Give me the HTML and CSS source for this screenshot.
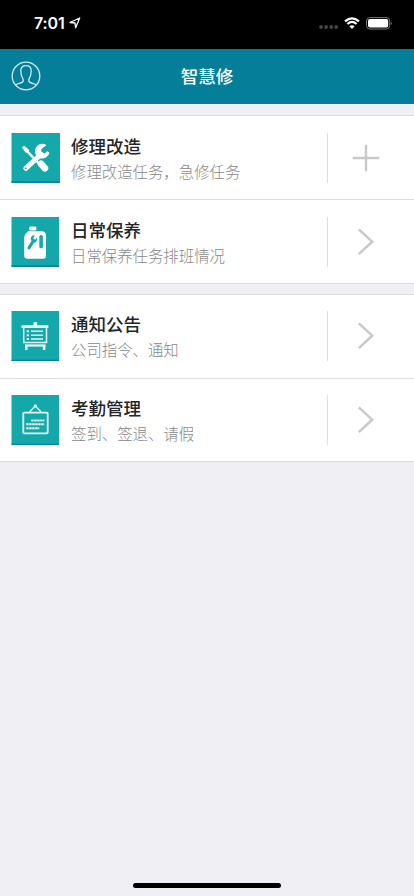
FILE: index.html
```html
<!DOCTYPE html>
<html lang="zh-CN">
<head>
<meta charset="utf-8">
<meta name="viewport" content="width=device-width, initial-scale=1">
<title>智慧修</title>
<link rel="stylesheet" href="styles.css">
</head>
<body>
<div class="status">
  <span class="time">7:01</span>
  <svg class="location" width="12" height="12" viewBox="0 0 12 12"><path d="M1 5.5 10.7 1 6.6 10.8 6 6Z" fill="none" stroke="#fff" stroke-width="1.3" stroke-linejoin="round"/></svg>
  <div class="signals">
    <svg width="20" height="4" viewBox="0 0 20 4" fill="#444"><circle cx="2" cy="2" r="1.9"/><circle cx="7.1" cy="2" r="1.9"/><circle cx="12.2" cy="2" r="1.9"/><circle cx="17.2" cy="2" r="1.9"/></svg>
    <svg class="wifi" width="16" height="12" viewBox="0 0 16 12" fill="none" stroke="#fff" stroke-width="2.1"><path d="M1 4.4Q8-1.8 15 4.4M3.4 7Q8 2.9 12.6 7"/><path d="M8 11.9 5.4 9.3Q8 7.2 10.6 9.3Z" fill="#fff" stroke="none"/></svg>
    <svg class="battery" width="27" height="13" viewBox="0 0 27 13"><rect x=".5" y=".6" width="23.2" height="11.4" rx="3.4" fill="none" stroke="#777"/><rect x="2" y="2.1" width="20.2" height="8.4" rx="2" fill="#fff"/><path d="M24.8 4.4Q27 6.3 24.8 8.2Z" fill="#777"/></svg>
  </div>
</div>
<header class="navbar">
  <svg class="avatar" width="30" height="30" viewBox="0 0 30 30" fill="none" stroke="#d5eaf0" stroke-width="1.3"><circle cx="15" cy="15" r="13.8"/><path d="M4.2 23.9C6 22.6 9.5 22.2 11 21.4 12.8 20.4 12.4 18.4 11.6 17.2 10.4 15.2 9.8 13 9.8 9.8 9.8 6.2 11.5 4.6 15 4.6S20.2 6.2 20.2 9.8C20.2 13 19.6 15.2 18.4 17.2 17.6 18.4 17.2 20.4 19 21.4 20.5 22.2 24 22.6 25.8 23.9"/></svg>
  <h1>智慧修</h1>
</header>
<main>
  <section class="group">
    <a class="row">
      <svg class="tile" viewBox="0 0 48 49" preserveAspectRatio="none"><rect x=".5" width="47.5" height="49" fill="#14a8aa"/><rect x=".5" y="47.3" width="47.5" height="1.7" fill="#0783a0"/>
        <g fill="none" stroke="#fff"><path d="M15.5 17.5 27 29.5" stroke-width="2.2"/><path d="M29.4 30.2 33.2 34.5" stroke-width="6.6" stroke-linecap="round"/><path d="M14.5 34.7 29.5 20.7" stroke-width="4.9" stroke-linecap="round"/></g>
        <path d="M10.5 14 12.8 12.5 17.4 16.2 17.8 19.6 14.4 19Z" fill="#fff"/><path d="M34.8 12A7.2 7.2 0 1 0 37.7 19.2L35.2 17.8 33.2 20 29.5 19.4 29.7 15.7Z" fill="#fff"/><circle cx="14.3" cy="34.7" r=".9" fill="#14a8aa"/></svg>
      <div class="copy"><h2>修理改造</h2><p>修理改造任务，急修任务</p></div>
      <div class="action"><svg width="28" height="28" viewBox="0 0 28 28"><path d="M14 .7V27.3M.7 14H27.3"/></svg></div>
    </a>
    <a class="row">
      <svg class="tile" viewBox="0 0 48 49" preserveAspectRatio="none"><rect x=".5" width="47.5" height="49" fill="#14a8aa"/><rect x=".5" y="47.3" width="47.5" height="1.7" fill="#0783a0"/>
        <rect x="18.3" y="9.2" width="7" height="4" rx="1.2" fill="#fff"/><path d="M17 14H30.5Q35 14 35 18.5V38Q35 41 32 41H16.2Q13.2 41 13.2 38V21Q13.2 18.5 14.3 17Z" fill="#fff"/><path d="M18 30.3 22 24" stroke="#14a8aa" stroke-width="3" stroke-linecap="round"/><path d="M23.7 17.6Q19.2 17.8 19.8 22.6L22.5 25.5Q26.8 24.8 26 20.2L24.1 22.3 22.3 21Z" fill="#14a8aa"/><rect x="28.3" y="17.6" width="3.6" height="13" rx="1.5" fill="#14a8aa"/></svg>
      <div class="copy"><h2>日常保养</h2><p>日常保养任务排班情况</p></div>
      <div class="action"><svg width="28" height="28" viewBox="0 0 28 28"><path class="chevron" d="M6.8 1.3 20.2 13.7 6.8 26.1"/></svg></div>
    </a>
  </section>
  <section class="group raised">
    <a class="row">
      <svg class="tile" viewBox="0 0 48 49" preserveAspectRatio="none"><rect x=".5" width="47.5" height="49" fill="#14a8aa"/><rect x=".5" y="47.8" width="47.5" height="1.2" fill="#0783a0"/>
        <g fill="none" stroke="#e3f6f5"><path d="M10.4 15.3H37.4" stroke-width="2.7"/><path d="M24.3 11V15" stroke-width="3.8"/><path d="M12.7 16V30.8H35.5V16" stroke-width="1.5"/><path d="M14 33.8H34.6" stroke-width="2.2"/><path d="M15.3 34V38.3M33.1 34V38.3" stroke-width="2.5"/><path d="M20 19.8H32M20 23.8H32M20 27.5H32" stroke-width="1.5"/><path d="M15.7 19.8H18M15.7 23.8H18M15.7 27.5H18" stroke-width="2"/></g></svg>
      <div class="copy"><h2>通知公告</h2><p>公司指令、通知</p></div>
      <div class="action"><svg width="28" height="28" viewBox="0 0 28 28"><path class="chevron" d="M6.8 1.3 20.2 13.7 6.8 26.1"/></svg></div>
    </a>
    <a class="row">
      <svg class="tile" viewBox="0 0 48 49" preserveAspectRatio="none"><rect x=".5" width="47.5" height="49" fill="#14a8aa"/><rect x=".5" y="47.8" width="47.5" height="1.2" fill="#0783a0"/>
        <g fill="none" stroke="#e3f6f5" stroke-width="1.8"><rect x="12.3" y="17.2" width="24.4" height="20.4" rx="1"/><path d="M18.6 16.5 24.3 10.8 30 16.5" stroke-width="1.3"/><path d="M20.2 25H33.5M15.2 28.7H33.5M15.2 32.5H28.3" stroke-width="2" stroke-dasharray="2.5 .5"/></g><circle cx="24.3" cy="10.7" r="1.6" fill="#e3f6f5"/></svg>
      <div class="copy"><h2>考勤管理</h2><p>签到、签退、请假</p></div>
      <div class="action"><svg width="28" height="28" viewBox="0 0 28 28"><path class="chevron" d="M6.8 1.3 20.2 13.7 6.8 26.1"/></svg></div>
    </a>
  </section>
</main>
<div class="home"></div>
</body>
</html>
```
FILE: styles.css
```css
* { box-sizing: border-box; }
body {
  margin: 0;
  height: 896px;
  display: flex;
  flex-direction: column;
  background: #efeff4;
  font-family: "Noto Sans CJK SC", sans-serif;
}
h1, h2, p { margin: 0; }
svg { display: block; flex: none; }
.status {
  height: 49px;
  padding: 0 21px 3px 34px;
  display: flex;
  align-items: center;
  background: #000;
  color: #fff;
}
.time {
  font: 600 16px/20px Inter, sans-serif;
  letter-spacing: -.1px;
  width: 35px;
}
.signals { display: flex; align-items: center; margin-left: auto; }
.signals svg:first-child { margin-top: 8px; }
.wifi { margin-left: 5px; }
.battery { margin-left: 6px; }
.navbar {
  height: 55px;
  padding: 0 11px 1px;
  display: grid;
  grid-template-columns: 30px 1fr 30px;
  align-items: center;
  background: #057f99;
  color: #fff;
}
.navbar h1 {
  font-size: 17.5px;
  line-height: 26px;
  font-weight: 500;
  text-align: center;
}
main { flex: 1; }
.group {
  margin-top: 11px;
  background: #fff;
  border-bottom: 1px solid #dcdcde;
}
.group + .group { margin-top: 10px; }
.row {
  height: 84px;
  padding-left: 11px;
  display: flex;
  align-items: center;
  border-top: 1px solid #dcdcde;
}
.raised .row { padding-bottom: 1px; }
.raised .row:last-child { height: 83px; }
.tile { width: 49px; height: 50px; }
.raised .tile, .row + .row .tile { width: 48px; margin-right: 1px; }
.copy { flex: 1; margin-left: 11px; padding-top: 1px; }
.copy h2 {
  font-size: 17.5px;
  line-height: 25px;
  font-weight: 500;
  color: #252525;
}
.copy p {
  font-size: 15.4px;
  line-height: 26px;
  font-weight: 300;
  color: #888;
}
.action {
  width: 87px;
  height: 50px;
  padding-left: 23.5px;
  display: flex;
  align-items: center;
  border-left: 1px solid #dedede;
}
.action path { fill: none; stroke: #c9c9c9; stroke-width: 2.4; }
.action .chevron { stroke-width: 2.5; }
.home {
  width: 148px;
  height: 5px;
  margin: 0 auto 8px;
  border-radius: 3px;
  background: #000;
}
```
